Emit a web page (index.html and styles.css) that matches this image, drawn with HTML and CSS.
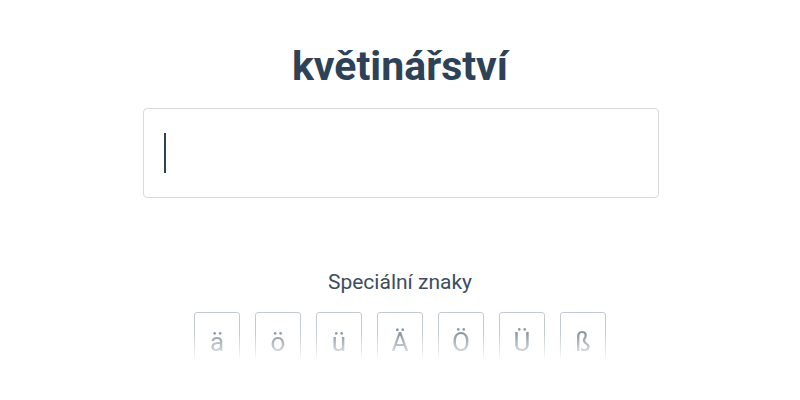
FILE: index.html
```html
<!DOCTYPE html>
<html>
<head>
<meta charset="utf-8">
<link rel="stylesheet" href="styles.css">
</head>
<body>
<div class="page">
  <h1 class="title">květinářství</h1>
  <div class="field"><span class="caret"></span></div>
  <div class="special-label">Speciální znaky</div>
  <div class="keys">
    <div class="key">ä</div>
    <div class="key">ö</div>
    <div class="key">ü</div>
    <div class="key">Ä</div>
    <div class="key">Ö</div>
    <div class="key">Ü</div>
    <div class="key">ß</div>
  </div>
</div>
</body>
</html>
```
FILE: styles.css
```css
html, body {
  margin: 0;
  padding: 0;
  background: #fff;
}
body {
  font-family: Roboto, "Noto Sans", sans-serif;
  width: 800px;
  height: 400px;
  overflow: hidden;
}
.page {
  display: flex;
  flex-direction: column;
  align-items: center;
}
.title {
  margin: 40px 0 0;
  font-size: 41px;
  line-height: 52px;
  font-weight: 700;
  color: #2d4157;
}
.field {
  margin-top: 16px;
  margin-left: 2px;
  width: 516px;
  height: 90px;
  border: 1px solid #d9d9d9;
  border-radius: 4px;
  display: flex;
  align-items: center;
  padding-left: 20px;
  box-sizing: border-box;
}
.caret {
  width: 2px;
  height: 40px;
  background: #2d4157;
}
.special-label {
  margin-top: 72px;
  font-size: 21px;
  line-height: 25px;
  color: #3b4d61;
}
.keys {
  margin-top: 17px;
  display: flex;
  gap: 15px;
  height: 47px;
  overflow: hidden;
  -webkit-mask-image: linear-gradient(to bottom, #000 45%, rgba(0,0,0,0.1) 100%);
  mask-image: linear-gradient(to bottom, #000 45%, rgba(0,0,0,0.1) 100%);
}
.key {
  width: 46px;
  height: 60px;
  border: 1px solid #c3cad1;
  border-radius: 3px;
  display: flex;
  justify-content: center;
  padding-top: 14px;
  box-sizing: border-box;
  font-size: 26px;
  line-height: 30px;
  color: #8a96a2;
}
```
